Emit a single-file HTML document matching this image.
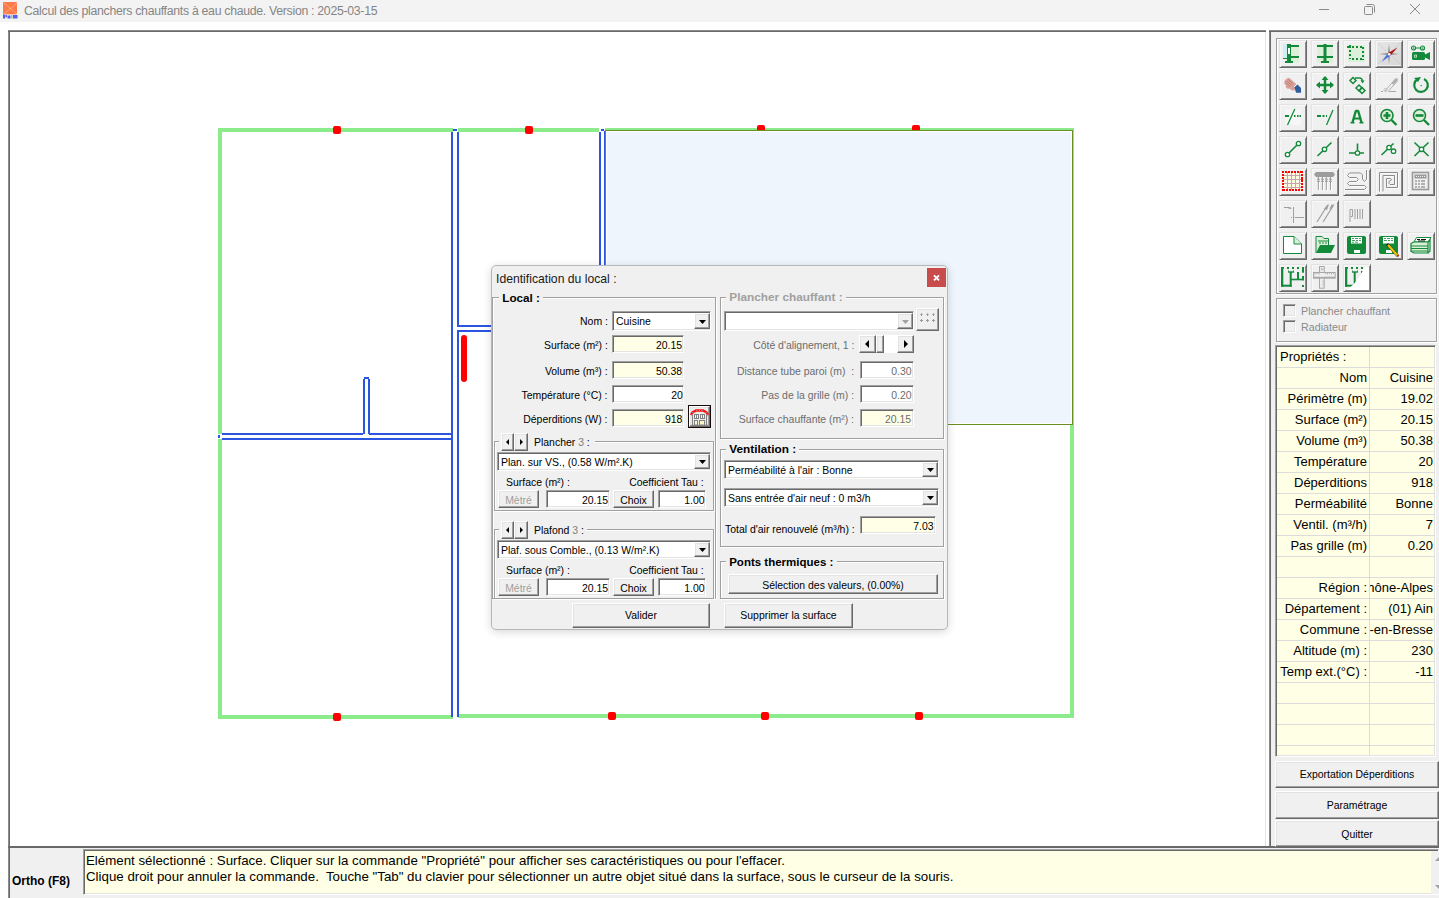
<!DOCTYPE html>
<html><head><meta charset="utf-8">
<style>
html,body{margin:0;padding:0;}
body{width:1439px;height:898px;overflow:hidden;position:relative;background:#fff;font-family:"Liberation Sans",sans-serif;color:#000;}
.a{position:absolute;}
.t{position:absolute;white-space:nowrap;line-height:1;}
.r{text-align:right;}
/* sunken textbox */
.tb{position:absolute;box-sizing:border-box;border:1px solid;border-color:#a0a0a0 #fff #fff #a0a0a0;box-shadow:inset 1px 1px #696969,inset -1px -1px #e3e3e3;background:#fff;}
.ye{background:#ffffe8;}
/* raised button */
.bt{position:absolute;box-sizing:border-box;border:1px solid;border-color:#fff #696969 #696969 #fff;box-shadow:inset -1px -1px #a0a0a0,inset 1px 1px #e3e3e3;background:#f0f0f0;}
/* etched group */
.gb{position:absolute;box-sizing:border-box;border:1px solid #a0a0a0;box-shadow:inset 1px 1px #fff,1px 1px #fff;}
.tbtn{position:absolute;width:28px;height:28px;box-sizing:border-box;border:1px solid;border-color:#e3e3e3 #696969 #696969 #e3e3e3;box-shadow:inset 1px 1px #f7f7f7,inset -1px -1px #8c8c8c;background:#f0f0f0;}
.tbtn svg{position:absolute;left:-1px;top:-1px;}
.cb{position:absolute;width:13px;height:13px;box-sizing:border-box;border:1px solid;border-color:#a0a0a0 #fff #fff #a0a0a0;box-shadow:inset 1px 1px #696969,inset -1px -1px #e3e3e3;background:#f0f0f0;}
.gr{position:absolute;left:1px;width:158px;height:21px;box-sizing:border-box;border-bottom:1px solid #dcdcdc;display:flex;font-size:13px;line-height:20px;}
.gl{box-sizing:border-box;width:93px;padding-right:2px;border-right:1px solid #dcdcdc;display:flex;justify-content:flex-end;overflow:hidden;white-space:nowrap;}
.gv{box-sizing:border-box;width:65px;padding-right:2px;display:flex;justify-content:flex-end;overflow:hidden;white-space:nowrap;}
</style></head><body>

<!-- title bar -->
<div class="a" style="left:0;top:0;width:1439px;height:22px;background:#f3f3f3;"></div>
<div class="a" id="appicon" style="left:2px;top:1px;width:17px;height:18px;">
<svg width="17" height="18" viewBox="0 0 17 18"><rect x="1" y="1" width="14" height="12.5" rx="0.5" fill="#fb7a4e"/><path d="M2 2L15 13M15 2L2 13" stroke="#ffd98a" stroke-width="0.8" stroke-dasharray="1 0.6"/>
<path d="M0.5 13.5H16.5V18H0.5Z" fill="#f2f5c8" opacity="0.6"/><g fill="#5360ef"><rect x="1" y="13.5" width="2.2" height="4"/><rect x="3.5" y="14" width="1.5" height="2.2"/><rect x="5.5" y="14.5" width="3" height="3"/><rect x="9.2" y="14" width="1.2" height="3.5" fill="#9aa0c8"/><rect x="11" y="14" width="4.5" height="3.5"/></g></svg>
</div>
<div class="t" style="left:24px;top:4.5px;font-size:12.3px;letter-spacing:-0.3px;color:#858585;">Calcul des planchers chauffants à eau chaude. Version : 2025-03-15</div>
<div class="a" style="left:1319px;top:9px;width:10px;height:1px;background:#8a8a8a;"></div>
<svg class="a" style="left:1363px;top:3px;" width="13" height="13" viewBox="0 0 13 13"><rect x="1.5" y="3.5" width="8" height="8" rx="1" fill="none" stroke="#8a8a8a"/><path d="M3.5 1.5h6a2 2 0 0 1 2 2v6" fill="none" stroke="#8a8a8a"/></svg>
<svg class="a" style="left:1409px;top:3px;" width="12" height="12" viewBox="0 0 12 12"><path d="M1 1L11 11M11 1L1 11" stroke="#8a8a8a" stroke-width="1"/></svg>

<!-- canvas frame -->
<div class="a" style="left:8px;top:30px;width:2px;height:868px;background:#696969;box-shadow:inset 1px 0 #8c8c8c;"></div>
<div class="a" style="left:8px;top:30px;width:1258px;height:2px;background:#696969;box-shadow:inset 0 1px #8c8c8c;"></div>
<div class="a" style="left:1265px;top:32px;width:1px;height:814px;background:#e3e3e3;"></div>

<!-- floor plan -->
<svg class="a" style="left:0;top:0;" width="1439" height="898" shape-rendering="crispEdges">
<rect x="218" y="128" width="235" height="4" fill="#8cec8c"/>
<rect x="458" y="128" width="141" height="4" fill="#8cec8c"/>
<rect x="605" y="128" width="469" height="4" fill="#8cec8c"/>
<rect x="218" y="128" width="4" height="306" fill="#8cec8c"/>
<rect x="218" y="439" width="4" height="280" fill="#8cec8c"/>
<rect x="218" y="715" width="235" height="4" fill="#8cec8c"/>
<rect x="458" y="714" width="616" height="4" fill="#8cec8c"/>
<rect x="1070" y="128" width="4" height="590" fill="#8cec8c"/>
<rect x="1073" y="128" width="1" height="590" fill="#8cec8c"/>
<rect x="451" y="132" width="2" height="585" fill="#2b55e0"/>
<rect x="457" y="132" width="2" height="195" fill="#2b55e0"/>
<rect x="457" y="330" width="2" height="387" fill="#2b55e0"/>
<rect x="453" y="129" width="4" height="2" fill="#2b55e0"/>
<rect x="459" y="325" width="141" height="2" fill="#2b55e0"/>
<rect x="459" y="330" width="141" height="2" fill="#2b55e0"/>
<rect x="599" y="132" width="2" height="195" fill="#2b55e0"/>
<rect x="604" y="131" width="1" height="196" fill="#2b55e0"/>
<rect x="601" y="129" width="3" height="2" fill="#2b55e0"/>
<rect x="222" y="433" width="141" height="2" fill="#2b55e0"/>
<rect x="369" y="433" width="82" height="2" fill="#2b55e0"/>
<rect x="222" y="438" width="229" height="2" fill="#2b55e0"/>
<rect x="218" y="435" width="2" height="3" fill="#2b55e0"/>
<rect x="363" y="379" width="2" height="55" fill="#2b55e0"/>
<rect x="368" y="379" width="2" height="55" fill="#2b55e0"/>
<rect x="364" y="377" width="5" height="2" fill="#2b55e0"/>
<rect x="333" y="126" width="8" height="8" rx="2" fill="#ff0000" shape-rendering="auto"/>
<rect x="525" y="126" width="8" height="8" rx="2" fill="#ff0000" shape-rendering="auto"/>
<rect x="757" y="125" width="8" height="8" rx="2" fill="#ff0000" shape-rendering="auto"/>
<rect x="912" y="125" width="8" height="8" rx="2" fill="#ff0000" shape-rendering="auto"/>
<rect x="333" y="713" width="8" height="8" rx="2" fill="#ff0000" shape-rendering="auto"/>
<rect x="608" y="712" width="8" height="8" rx="2" fill="#ff0000" shape-rendering="auto"/>
<rect x="761" y="712" width="8" height="8" rx="2" fill="#ff0000" shape-rendering="auto"/>
<rect x="915" y="712" width="8" height="8" rx="2" fill="#ff0000" shape-rendering="auto"/>
<rect x="461" y="335" width="6" height="47" rx="3" fill="#ff0000" shape-rendering="auto"/>
<rect x="605" y="130" width="468" height="295" fill="#6b8e23"/>
<rect x="606" y="131" width="466" height="293" fill="#ffffff"/>
<rect x="607" y="132" width="464" height="291" fill="#eef5fd"/>
<rect x="604" y="131" width="1" height="196" fill="#2b55e0"/>
<rect x="1073" y="128" width="1" height="590" fill="#8cec8c"/>
</svg>

<!-- right panel -->
<div class="a" style="left:1269px;top:30px;width:170px;height:816px;background:#f0f0f0;"></div>
<div class="a" style="left:1269px;top:30px;width:2px;height:816px;background:#696969;box-shadow:inset 1px 0 #8c8c8c;"></div>
<div class="a" style="left:1269px;top:30px;width:170px;height:2px;background:#696969;box-shadow:inset 0 1px #8c8c8c;"></div>

<!-- status bar -->
<div class="a" style="left:10px;top:848px;width:1429px;height:50px;background:#f0f0f0;"></div>
<div class="a" style="left:8px;top:846px;width:1431px;height:2px;background:#696969;"></div>

<div class="gb" style="left:1276px;top:38px;width:161px;height:256px;"></div>
<div class="tbtn" style="left:1279px;top:40px;"><svg width="28" height="28" viewBox="0 0 28 28"><rect x="4" y="4" width="4" height="15" fill="#cdeef2"/><rect x="8" y="5" width="12" height="18" fill="#dcefd9"/>
<rect x="8" y="4" width="4" height="19" fill="#138a3a"/><rect x="9" y="8" width="2" height="6" fill="#fff"/>
<rect x="12" y="5" width="8" height="2" fill="#138a3a"/><rect x="12" y="16" width="8" height="2" fill="#138a3a"/>
<rect x="6" y="21" width="8" height="2" fill="#138a3a"/><rect x="4" y="18" width="4" height="1" fill="#138a3a"/></svg></div>
<div class="tbtn" style="left:1311px;top:40px;"><svg width="28" height="28" viewBox="0 0 28 28"><rect x="6" y="4" width="16" height="19" fill="#dcefd9"/>
<rect x="6" y="5" width="16" height="2" fill="#138a3a"/><rect x="6" y="16" width="16" height="2" fill="#138a3a"/>
<rect x="12.5" y="4" width="3" height="18" fill="#138a3a"/><rect x="10" y="21" width="8" height="2" fill="#138a3a"/></svg></div>
<div class="tbtn" style="left:1343px;top:40px;"><svg width="28" height="28" viewBox="0 0 28 28"><rect x="5" y="5" width="17" height="17" fill="#dcefd9"/>
<path d="M4 7h3M7 5v3M9 7h2M13 7h2M17 7h2M20 7v2M20 11v2M20 15v2M20 19v1M7 10v2M7 14v2M7 18v1M9 19h2M13 19h2M17 19h2" stroke="#138a3a" stroke-width="2"/></svg></div>
<div class="tbtn" style="left:1375px;top:40px;"><svg width="28" height="28" viewBox="0 0 28 28"><defs><linearGradient id="cg" x1="0" y1="0" x2="1" y2="1"><stop offset="0" stop-color="#e6e6e6"/><stop offset="1" stop-color="#d6d6d6"/></linearGradient></defs>
<rect x="2" y="2" width="24" height="23" fill="url(#cg)"/>
<path d="M3 3L11 11M25 3L17 11M3 24L11 16M25 24L17 16" stroke="#c8c8c8" stroke-width="0.7"/>
<path d="M14 4L15 13L24 14L15 15L14 24L13 15L4 14L13 13Z" fill="#8c8c8c"/>
<path d="M22.5 7.5L15.5 13L13 15.5Z" fill="#d42020"/><path d="M22.5 7.5L15.5 15.5L13 13Z" fill="#b01818"/>
<path d="M6.5 22L13 15.5L15.5 13Z" fill="#2040c0"/><path d="M6.5 22L15.5 15.5L13 13Z" fill="#4a70e0"/>
<circle cx="14.2" cy="14.3" r="1.3" fill="#fff"/></svg></div>
<div class="tbtn" style="left:1407px;top:40px;"><svg width="28" height="28" viewBox="0 0 28 28"><circle cx="6.5" cy="8" r="2" fill="none" stroke="#138a3a" stroke-width="1.2"/><circle cx="15.5" cy="8" r="2" fill="none" stroke="#138a3a" stroke-width="1.2"/>
<path d="M8.5 8h5" stroke="#138a3a" stroke-width="1"/><circle cx="6.5" cy="8" r="0.7" fill="#138a3a"/><circle cx="15.5" cy="8" r="0.7" fill="#138a3a"/>
<rect x="5" y="12" width="13" height="8" rx="1.5" fill="#138a3a"/><path d="M17 15L23 12V20L17 17Z" fill="#138a3a"/>
<rect x="7.3" y="14.7" width="2.5" height="2.8" fill="#fff"/><rect x="8" y="15.3" width="1.2" height="1.6" fill="#138a3a"/></svg></div>
<div class="tbtn" style="left:1279px;top:72px;"><svg width="28" height="28" viewBox="0 0 28 28"><g transform="rotate(42 12 12)"><rect x="5" y="8.5" width="14" height="8" rx="4" fill="#d9a09a"/>
<path d="M7 10.5H13M7 12.5H13.5M7 14.5H13" stroke="#b77b74" stroke-width="0.8"/></g>
<ellipse cx="8.5" cy="15.2" rx="2" ry="1.3" transform="rotate(35 8.5 15.2)" fill="#d9a09a"/>
<path d="M15.5 15.5L18.5 12.5L22 16V20.8H17Z" fill="#2d5f9e"/><path d="M15 15L18 12" stroke="#fff" stroke-width="0.9"/></svg></div>
<div class="tbtn" style="left:1311px;top:72px;"><svg width="28" height="28" viewBox="0 0 28 28"><path d="M14 5V21M6 13H22" stroke="#138a3a" stroke-width="2.5"/>
<path d="M14 4L10.5 8H17.5Z M14 22L10.5 18H17.5Z M5 13L9 9.5V16.5Z M23 13L19 9.5V16.5Z" fill="#138a3a"/></svg></div>
<div class="tbtn" style="left:1343px;top:72px;"><svg width="28" height="28" viewBox="0 0 28 28"><path d="M10 5.5L13 8.5L10 11.5L7 8.5Z" fill="none" stroke="#138a3a" stroke-width="1.5"/>
<path d="M16 13L19 16L16 19L13 16Z" fill="none" stroke="#138a3a" stroke-width="1.5"/>
<path d="M19 15.5L22 18.5L19 21.5L16 18.5Z" fill="none" stroke="#138a3a" stroke-width="1.5"/>
<path d="M12 6H17C18.5 6 19 7 19.5 8.5" fill="none" stroke="#138a3a" stroke-width="1.5"/><path d="M17.5 8L21.5 8.5L19.5 11.5Z" fill="#138a3a"/></svg></div>
<div class="tbtn" style="left:1375px;top:72px;"><svg width="28" height="28" viewBox="0 0 28 28"><path d="M10 19L21 6M13 19.5L22.5 9" stroke="#b0b0b0" stroke-width="1"/><path d="M17 11L22 6L23 8L18 13Z" fill="#a8a8a8"/>
<path d="M6 19.5h2M14 19.5h7" stroke="#a8a8a8" stroke-width="1"/><circle cx="10.5" cy="18" r="1.6" fill="none" stroke="#b8b8b8" stroke-width="0.8"/></svg></div>
<div class="tbtn" style="left:1407px;top:72px;"><svg width="28" height="28" viewBox="0 0 28 28"><path d="M10.5 7.3A6.8 6.8 0 1 0 17 7" fill="none" stroke="#138a3a" stroke-width="2.2"/>
<path d="M7 6L14 5L11 10Z" fill="#138a3a"/><rect x="13.5" y="13" width="1.2" height="1.2" fill="#138a3a"/></svg></div>
<div class="tbtn" style="left:1279px;top:104px;"><svg width="28" height="28" viewBox="0 0 28 28"><rect x="6" y="5" width="16" height="16" fill="#f6f6f6"/>
<path d="M6 12h4M15 12h1.5M18 12h1.5M20.5 12h1.5" stroke="#138a3a" stroke-width="1.8"/><path d="M8.5 21L15.8 5" stroke="#138a3a" stroke-width="1.3"/></svg></div>
<div class="tbtn" style="left:1311px;top:104px;"><svg width="28" height="28" viewBox="0 0 28 28"><path d="M6 12h4M11.5 12h2M15 12h1" stroke="#138a3a" stroke-width="1.8"/><path d="M15.5 21L22 6" stroke="#138a3a" stroke-width="1.3"/></svg></div>
<div class="tbtn" style="left:1343px;top:104px;"><svg width="28" height="28" viewBox="0 0 28 28"><path d="M9.5 18.5L12.8 7H15.2L18.5 18.5" fill="none" stroke="#138a3a" stroke-width="2.4" stroke-linejoin="bevel"/><path d="M11 14.5h6" stroke="#138a3a" stroke-width="2"/><path d="M7.5 18.7h4M16.5 18.7h4" stroke="#138a3a" stroke-width="1.4"/></svg></div>
<div class="tbtn" style="left:1375px;top:104px;"><svg width="28" height="28" viewBox="0 0 28 28"><circle cx="12" cy="11.5" r="6" fill="#dcefd9" stroke="#138a3a" stroke-width="1.6"/><path d="M16.5 16L21.5 21" stroke="#138a3a" stroke-width="2.4"/>
<path d="M12 8v7M8.5 11.5h7" stroke="#138a3a" stroke-width="2.6"/></svg></div>
<div class="tbtn" style="left:1407px;top:104px;"><svg width="28" height="28" viewBox="0 0 28 28"><circle cx="12.5" cy="11.5" r="6" fill="#dcefd9" stroke="#138a3a" stroke-width="1.6"/><path d="M17 16L22 21" stroke="#138a3a" stroke-width="2.4"/>
<path d="M8.5 11.5h8" stroke="#138a3a" stroke-width="2.6"/></svg></div>
<div class="tbtn" style="left:1279px;top:136px;"><svg width="28" height="28" viewBox="0 0 28 28"><path d="M8.5 18.5L19.5 7.5" stroke="#138a3a" stroke-width="1.6"/><circle cx="8.5" cy="18.5" r="2.2" fill="#fff" stroke="#138a3a" stroke-width="1.3"/><circle cx="19.5" cy="7.5" r="2.2" fill="#fff" stroke="#138a3a" stroke-width="1.3"/></svg></div>
<div class="tbtn" style="left:1311px;top:136px;"><svg width="28" height="28" viewBox="0 0 28 28"><path d="M6.5 20L20.5 6.5" stroke="#138a3a" stroke-width="1.6"/><circle cx="13.5" cy="13.3" r="2.2" fill="#fff" stroke="#138a3a" stroke-width="1.3"/></svg></div>
<div class="tbtn" style="left:1343px;top:136px;"><svg width="28" height="28" viewBox="0 0 28 28"><path d="M14.5 7.5V17M6 17h15" stroke="#138a3a" stroke-width="1.6"/><circle cx="14.5" cy="17" r="2.2" fill="#fff" stroke="#138a3a" stroke-width="1.3"/></svg></div>
<div class="tbtn" style="left:1375px;top:136px;"><svg width="28" height="28" viewBox="0 0 28 28"><path d="M6.5 19L18.5 7.5" stroke="#138a3a" stroke-width="1.6"/><circle cx="14" cy="11.5" r="2.2" fill="#fff" stroke="#138a3a" stroke-width="1.3"/><circle cx="18.5" cy="15.2" r="2.2" fill="#fff" stroke="#138a3a" stroke-width="1.3"/></svg></div>
<div class="tbtn" style="left:1407px;top:136px;"><svg width="28" height="28" viewBox="0 0 28 28"><path d="M7.5 6.5L21.5 20M21.5 6.5L7.5 20" stroke="#138a3a" stroke-width="1.6"/><circle cx="14.5" cy="13.3" r="2.2" fill="#fff" stroke="#138a3a" stroke-width="1.3"/></svg></div>
<div class="tbtn" style="left:1279px;top:168px;"><svg width="28" height="28" viewBox="0 0 28 28"><rect x="4" y="4" width="19" height="18" fill="#fffde0"/>
<path d="M8.5 4V22M12.5 4V22M16.5 4V22M20.5 4V22M4 7.5H23M4 11.5H23M4 15.5H23M4 19.5H23" stroke="#c8a0b8" stroke-width="1"/>
<g fill="#ff0000"><rect x="3" y="3" width="2" height="2"/><rect x="6" y="3" width="2" height="2"/><rect x="9" y="3" width="2" height="2"/><rect x="12" y="3" width="2" height="2"/><rect x="15" y="3" width="2" height="2"/><rect x="18" y="3" width="2" height="2"/><rect x="21" y="3" width="3" height="2"/>
<rect x="3" y="21" width="3" height="2"/><rect x="7" y="21" width="2" height="2"/><rect x="10" y="21" width="2" height="2"/><rect x="13" y="21" width="2" height="2"/><rect x="16" y="21" width="2" height="2"/><rect x="19" y="21" width="2" height="2"/><rect x="22" y="21" width="2" height="2"/>
<rect x="3" y="6" width="2" height="2"/><rect x="3" y="9" width="2" height="2"/><rect x="3" y="12" width="2" height="2"/><rect x="3" y="15" width="2" height="2"/><rect x="3" y="18" width="2" height="2"/>
<rect x="22" y="6" width="2" height="2"/><rect x="22" y="9" width="2" height="5"/><rect x="22" y="15" width="2" height="2"/><rect x="22" y="18" width="2" height="2"/></g></svg></div>
<div class="tbtn" style="left:1311px;top:168px;"><svg width="28" height="28" viewBox="0 0 28 28"><path d="M3 6.5L5 4H22L24 6.5L22 9H5Z" fill="#9c9c9c"/>
<g stroke="#fff" stroke-width="1"><path d="M8.4 9.5V22.5M12.4 9.5V22.5M16.3 9.5V22.5M20.5 9.5V22.5"/></g>
<g stroke="#9c9c9c" stroke-width="1"><path d="M7.4 9V22M11.4 9V22M15.3 9V22M19.5 9V22M6 11.2H9M10 11.2H13M14 11.2H17M18 11.2H21M6 13.3H9M10 13.3H13M14 13.3H17M18 13.3H21"/></g></svg></div>
<div class="tbtn" style="left:1343px;top:168px;"><svg width="28" height="28" viewBox="0 0 28 28"><g fill="none" stroke-width="1"><path transform="translate(0.7,0.7)" d="M23.5 2V11.5L21.5 13.5L19.5 11V7L17.5 5H6.5L4.5 7.5L6.5 9.5H13.5L15.5 11.5L13.5 13.5H6.5L4.5 15.5L6.5 17.5H21.5L23.5 19.5L21.5 21.5H2" stroke="#fff"/>
<path d="M23.5 2V11.5L21.5 13.5L19.5 11V7L17.5 5H6.5L4.5 7.5L6.5 9.5H13.5L15.5 11.5L13.5 13.5H6.5L4.5 15.5L6.5 17.5H21.5L23.5 19.5L21.5 21.5H2" stroke="#8c8c8c"/></g></svg></div>
<div class="tbtn" style="left:1375px;top:168px;"><svg width="28" height="28" viewBox="0 0 28 28"><g fill="none" stroke-width="1"><path transform="translate(0.7,0.7)" d="M4.5 23.5V4.5H22.5V19.5H11.5V10.5H15.5L16.5 12L14 13.5V15.5L15 16.5H19.5V7.5H8V23.5" stroke="#fff"/>
<path d="M4.5 23.5V4.5H22.5V19.5H11.5V10.5H15.5L16.5 12L14 13.5V15.5L15 16.5H19.5V7.5H8V23.5" stroke="#8c8c8c"/></g></svg></div>
<div class="tbtn" style="left:1407px;top:168px;"><svg width="28" height="28" viewBox="0 0 28 28"><rect x="5.5" y="4.5" width="16" height="17" fill="none" stroke="#9a9a9a" stroke-width="1.6"/><rect x="7.5" y="6.5" width="12" height="4" fill="#9a9a9a"/>
<path d="M9 8.5h9" stroke="#f0f0f0" stroke-width="1" stroke-dasharray="1 1"/>
<path d="M8 13h2M11 13h2M14 13h4M8 16h2M11 13h2M11 16h2M14 16h4M8 19h2M11 19h2M14 19h4" stroke="#9a9a9a" stroke-width="1.6"/></svg></div>
<div class="tbtn" style="left:1279px;top:200px;"><svg width="28" height="28" viewBox="0 0 28 28"><path d="M5 7.5H11L12 8.5M14.5 7V23M15.5 17.5H25" stroke="#a0a0a0" stroke-width="1"/><rect x="12" y="17" width="1" height="1" fill="#a0a0a0"/></svg></div>
<div class="tbtn" style="left:1311px;top:200px;"><svg width="28" height="28" viewBox="0 0 28 28"><path d="M6 22L16 6M12 22L22 6" stroke="#a0a0a0" stroke-width="1.2"/><path d="M13 9L16.5 4.5H18L16 10Z M18.5 9L20.5 4.5H23.5L20 9.5Z" fill="#a0a0a0"/></svg></div>
<div class="tbtn" style="left:1343px;top:200px;"><svg width="28" height="28" viewBox="0 0 28 28"><path d="M7 22V9.5H9.5V16.5H7.5M12 9V19M14.5 9V19M17 9V19M19.5 9V19" fill="none" stroke="#a0a0a0" stroke-width="1"/></svg></div>
<div class="tbtn" style="left:1279px;top:232px;"><svg width="28" height="28" viewBox="0 0 28 28"><path d="M4.5 4.5H15L22.5 12V21.5H4.5Z" fill="#fff" stroke="#138a3a" stroke-width="1"/><path d="M15 4.5V12H22.5" fill="#dcefd9" stroke="#138a3a" stroke-width="1"/></svg></div>
<div class="tbtn" style="left:1311px;top:232px;"><svg width="28" height="28" viewBox="0 0 28 28"><path d="M5 21V4.5H11L13 6.5H17.5V13" fill="#dcefd9" stroke="#138a3a" stroke-width="1"/>
<path d="M7 9h10M8 11h2M11 11h2M14 11h2" stroke="#138a3a" stroke-width="1"/>
<path d="M5 21L9 13H24L20 21Z" fill="#138a3a"/></svg></div>
<div class="tbtn" style="left:1343px;top:232px;"><svg width="28" height="28" viewBox="0 0 28 28"><rect x="4" y="4" width="19" height="18" rx="2" fill="#138a3a"/><rect x="8" y="5" width="11" height="6.5" fill="#fff"/>
<path d="M9 6.5h2M12 6.5h3M16 6.5h2M9 8.5h3M13 8.5h2M16 8.5h2M9 10.2h2M12 10.2h3" stroke="#138a3a" stroke-width="0.8"/>
<rect x="11" y="18" width="6" height="3" fill="#fff"/></svg></div>
<div class="tbtn" style="left:1375px;top:232px;"><svg width="28" height="28" viewBox="0 0 28 28"><rect x="4" y="4" width="19" height="18" rx="2" fill="#138a3a"/><rect x="8" y="5" width="11" height="6.5" fill="#fff"/>
<path d="M9 6.5h2M12 6.5h3M16 6.5h2M9 8.5h3M13 8.5h2M16 8.5h2" stroke="#138a3a" stroke-width="0.8"/>
<rect x="11" y="18" width="6" height="3" fill="#fff"/>
<path d="M12 12L23 24" stroke="#222" stroke-width="2.8"/><path d="M13 13L23 24" stroke="#f2c500" stroke-width="2.2"/><rect x="22" y="23" width="1.6" height="1.6" fill="#e00"/></svg></div>
<div class="tbtn" style="left:1407px;top:232px;"><svg width="28" height="28" viewBox="0 0 28 28"><path d="M7 10L9.5 5.5H24L21 10Z" fill="#fff" stroke="#138a3a" stroke-width="1"/><path d="M10 7.5h3M14 7.5h5M11 9h7" stroke="#111" stroke-width="1"/>
<path d="M4 11.5L7 10H21V21H7L4 19.5Z" fill="#dcefd9" stroke="#138a3a" stroke-width="1.2"/>
<path d="M4 14H21M4 16.5H21M4 19H21M21 10L23 8V19L21 21" fill="none" stroke="#138a3a" stroke-width="1.2"/></svg></div>
<div class="tbtn" style="left:1279px;top:264px;"><svg width="28" height="28" viewBox="0 0 28 28"><g fill="#138a3a"><rect x="2" y="3" width="2.3" height="19.7"/><rect x="2" y="3" width="3" height="1.7"/><rect x="2" y="20.7" width="10.7" height="2"/>
<rect x="8" y="3" width="2" height="2"/><rect x="13" y="3" width="2" height="2"/><rect x="18" y="3" width="2" height="2"/>
<rect x="9" y="7.3" width="6" height="1.4"/><rect x="9" y="6.5" width="1" height="1"/><rect x="14" y="6.5" width="1" height="1"/><rect x="10.7" y="8" width="2" height="14.7"/>
<rect x="23" y="3" width="2" height="5.7"/><rect x="23" y="12" width="2" height="4.3"/><rect x="12" y="14.7" width="13" height="1.6"/><rect x="18" y="8" width="2" height="8"/><rect x="23" y="21" width="2" height="2"/></g></svg></div>
<div class="tbtn" style="left:1311px;top:264px;"><svg width="28" height="28" viewBox="0 0 28 28"><rect x="8" y="2" width="5.7" height="22.7" fill="#a8a8a8"/><rect x="9" y="3" width="3.7" height="20.7" fill="#eeeeee"/>
<rect x="2" y="8" width="22.7" height="6.7" fill="#a8a8a8"/><rect x="3" y="9" width="20.7" height="3.7" fill="#eeeeee"/><rect x="9" y="9" width="3.7" height="3.7" fill="#eeeeee"/>
<path d="M4 9v1.5M6 9v1M8 9v1.5M14.5 9v1M16.5 9v1.5M18.5 9v1M20.5 9v1.5M22.5 9v1M11.5 17h1.2M11.5 19h1.2M11.5 21h1.2M10 4l2 2M10 6.5l2-2" stroke="#a8a8a8" stroke-width="0.9"/></svg></div>
<div class="tbtn" style="left:1343px;top:264px;"><svg width="28" height="28" viewBox="0 0 28 28"><g fill="#138a3a"><rect x="2" y="3" width="2.3" height="19.7"/><rect x="2" y="3" width="3" height="1.7"/><rect x="2" y="20.7" width="10.7" height="2"/>
<rect x="8" y="3" width="2" height="2"/><rect x="13" y="3" width="2" height="2"/><rect x="18" y="3" width="2" height="2"/>
<rect x="9" y="7.3" width="6" height="1.4"/><rect x="9" y="6.5" width="1" height="1"/><rect x="14" y="6.5" width="1" height="1"/><rect x="10.7" y="8" width="2" height="14.7"/>
<rect x="18" y="7" width="2" height="2"/></g>
<path d="M21.5 3H26V26H4C11 21 18 12 21.5 3Z" fill="#fff"/></svg></div>
<!-- checkbox group -->
<div class="gb" style="left:1276px;top:298px;width:161px;height:44px;"></div>
<div class="cb" style="left:1283px;top:304px;"></div>
<div class="t" style="left:1301px;top:305.5px;font-size:11px;color:#8a8a8a;transform:scaleX(0.973);transform-origin:left center;">Plancher chauffant</div>
<div class="cb" style="left:1283px;top:320px;"></div>
<div class="t" style="left:1301px;top:321.5px;font-size:11px;color:#8a8a8a;transform:scaleX(0.973);transform-origin:left center;">Radiateur</div>

<!-- property grid -->
<div class="a" style="left:1275px;top:345px;width:161px;height:412px;box-sizing:border-box;border:1px solid;border-color:#a0a0a0 #fff #fff #a0a0a0;box-shadow:inset 1px 1px #696969,inset -1px -1px #e3e3e3;background:#ffffe6;overflow:hidden;">
<div class="gr" style="top:1px;"><div class="gl" style="justify-content:flex-start;padding-left:3px;">Propriétés :</div><div class="gv"></div></div>
<div class="gr" style="top:22px;"><div class="gl" style="justify-content:flex-end;">Nom</div><div class="gv">Cuisine</div></div>
<div class="gr" style="top:43px;"><div class="gl" style="justify-content:flex-end;">Périmètre (m)</div><div class="gv">19.02</div></div>
<div class="gr" style="top:64px;"><div class="gl" style="justify-content:flex-end;">Surface (m²)</div><div class="gv">20.15</div></div>
<div class="gr" style="top:85px;"><div class="gl" style="justify-content:flex-end;">Volume (m³)</div><div class="gv">50.38</div></div>
<div class="gr" style="top:106px;"><div class="gl" style="justify-content:flex-end;">Température</div><div class="gv">20</div></div>
<div class="gr" style="top:127px;"><div class="gl" style="justify-content:flex-end;">Déperditions</div><div class="gv">918</div></div>
<div class="gr" style="top:148px;"><div class="gl" style="justify-content:flex-end;">Perméabilité</div><div class="gv">Bonne</div></div>
<div class="gr" style="top:169px;"><div class="gl" style="justify-content:flex-end;">Ventil. (m³/h)</div><div class="gv">7</div></div>
<div class="gr" style="top:190px;"><div class="gl" style="justify-content:flex-end;">Pas grille (m)</div><div class="gv">0.20</div></div>
<div class="gr" style="top:211px;"><div class="gl" style="justify-content:flex-end;"></div><div class="gv"></div></div>
<div class="gr" style="top:232px;"><div class="gl" style="justify-content:flex-end;">Région :</div><div class="gv">Auvergne-Rhône-Alpes</div></div>
<div class="gr" style="top:253px;"><div class="gl" style="justify-content:flex-end;">Département :</div><div class="gv">(01) Ain</div></div>
<div class="gr" style="top:274px;"><div class="gl" style="justify-content:flex-end;">Commune :</div><div class="gv">Bourg-en-Bresse</div></div>
<div class="gr" style="top:295px;"><div class="gl" style="justify-content:flex-end;">Altitude (m) :</div><div class="gv">230</div></div>
<div class="gr" style="top:316px;"><div class="gl" style="justify-content:flex-end;">Temp ext.(°C) :</div><div class="gv">-11</div></div>
<div class="gr" style="top:337px;"><div class="gl" style="justify-content:flex-end;"></div><div class="gv"></div></div>
<div class="gr" style="top:358px;"><div class="gl" style="justify-content:flex-end;"></div><div class="gv"></div></div>
<div class="gr" style="top:379px;"><div class="gl" style="justify-content:flex-end;"></div><div class="gv"></div></div>
<div class="gr" style="top:400px;"><div class="gl" style="justify-content:flex-end;"></div><div class="gv"></div></div>
</div>

<!-- buttons -->
<div class="bt" style="left:1275px;top:761px;width:164px;height:27px;"></div>
<div class="t" style="left:1275px;top:769.4px;width:164px;text-align:center;font-size:11.5px;transform:scaleX(0.909);">Exportation Déperditions</div>
<div class="bt" style="left:1275px;top:791px;width:164px;height:28px;"></div>
<div class="t" style="left:1275px;top:800.4px;width:164px;text-align:center;font-size:11.5px;transform:scaleX(0.909);">Paramétrage</div>
<div class="bt" style="left:1275px;top:820px;width:164px;height:27px;"></div>
<div class="t" style="left:1275px;top:829px;width:164px;text-align:center;font-size:11.5px;transform:scaleX(0.909);">Quitter</div>

<!-- status -->
<div class="t" style="left:12px;top:875px;font-size:12px;font-weight:bold;">Ortho (F8)</div>
<div class="tb" style="left:83px;top:849px;width:1356px;height:46px;background:#ffffe6;"></div>
<div class="t" style="left:86px;top:852.5px;font-size:13.3px;line-height:16px;">Elément sélectionné : Surface. Cliquer sur la commande "Propriété" pour afficher ses caractéristiques ou pour l'effacer.<br>Clique droit pour annuler la commande.&nbsp; Touche "Tab" du clavier pour sélectionner un autre objet situé dans la surface, sous le curseur de la souris.</div>
<div class="a" style="left:1431px;top:851px;width:8px;height:43px;background:#f0f0f0;"></div>
<svg class="a" style="left:1431px;top:851px;" width="8" height="43"><path d="M4 10L8 6V10Z" fill="#a0a0a0"/><path d="M4 34L8 38V34Z" fill="#a0a0a0"/></svg>

<div class="a" style="left:491px;top:265px;width:457px;height:365px;box-sizing:border-box;border:1px solid #b4b8bc;border-radius:5px;background:#f0f0f0;box-shadow:0 2px 8px rgba(0,0,0,0.16);"></div>
<div class="t" style="top:272.67px;font-size:12.2px;color:#1a1a1a;left:496px;">Identification du local :</div>
<div class="a" style="left:927px;top:268px;width:19px;height:19px;background:#c94c4c;"></div>
<svg class="a" style="left:927px;top:268px;" width="19" height="19"><path d="M7 7.3L12 12.3M12 7.3L7 12.3" stroke="#fff" stroke-width="1.9"/></svg>
<div class="gb" style="left:492px;top:297px;width:224px;height:302px;"></div>
<div class="t" style="top:291.70px;font-size:11.7px;color:#000;font-weight:bold;background:#f0f0f0;left:499px;">&nbsp;Local :&nbsp;</div>
<div class="t" style="top:315.18px;font-size:11.6px;color:#000;transform:scaleX(0.9009);transform-origin:right center;right:831.5px;">Nom :</div>
<div class="t" style="top:339.18px;font-size:11.6px;color:#000;transform:scaleX(0.9009);transform-origin:right center;right:831.5px;">Surface (m²) :</div>
<div class="t" style="top:365.18px;font-size:11.6px;color:#000;transform:scaleX(0.9009);transform-origin:right center;right:831.5px;">Volume (m³) :</div>
<div class="t" style="top:389.18px;font-size:11.6px;color:#000;transform:scaleX(0.9009);transform-origin:right center;right:831.5px;">Température (°C) :</div>
<div class="t" style="top:413.18px;font-size:11.6px;color:#000;transform:scaleX(0.9009);transform-origin:right center;right:831.5px;">Déperditions (W) :</div>
<div class="tb" style="left:612px;top:311px;width:99px;height:20px;"></div>
<div class="bt" style="left:694px;top:313px;width:16px;height:16px;"></div>
<svg class="a" style="left:698.5px;top:319.5px;" width="7" height="4"><path d="M0 0H7L3.5 4Z" fill="#000"/></svg>
<div class="t" style="top:314.98px;font-size:11.6px;color:#000;transform:scaleX(0.9009);transform-origin:left center;left:616px;">Cuisine</div>
<div class="tb ye" style="left:612px;top:335px;width:72px;height:18px;"></div>
<div class="t" style="top:338.98px;font-size:11.6px;color:#000;transform:scaleX(0.9009);transform-origin:right center;right:756.5px;">20.15</div>
<div class="tb ye" style="left:612px;top:361px;width:72px;height:18px;"></div>
<div class="t" style="top:364.98px;font-size:11.6px;color:#000;transform:scaleX(0.9009);transform-origin:right center;right:756.5px;">50.38</div>
<div class="tb" style="left:612px;top:385px;width:72px;height:18px;"></div>
<div class="t" style="top:388.98px;font-size:11.6px;color:#000;transform:scaleX(0.9009);transform-origin:right center;right:756.5px;">20</div>
<div class="tb ye" style="left:612px;top:409px;width:72px;height:18px;"></div>
<div class="t" style="top:412.98px;font-size:11.6px;color:#000;transform:scaleX(0.9009);transform-origin:right center;right:756.5px;">918</div>
<div class="a" style="left:688px;top:405px;width:23px;height:23px;box-sizing:border-box;border:1px solid #1a0a0a;"></div>
<div class="bt" style="left:689px;top:406px;width:21px;height:21px;background:#ececec;"></div>
<svg class="a" style="left:688px;top:405px;" width="23" height="23" viewBox="0 0 23 23">
<path d="M3 10L4.5 7.5L8 5.5H15L18.5 7.5L20 10" fill="none" stroke="#ff1010" stroke-width="2.4"/>
<g fill="#30d8e8"><rect x="4.5" y="7" width="1" height="1"/><rect x="8.5" y="5" width="1" height="1"/><rect x="11" y="5" width="1" height="1"/><rect x="13.5" y="5" width="1" height="1"/><rect x="17.5" y="7" width="1" height="1"/><rect x="3.5" y="9.5" width="1" height="1"/><rect x="18.5" y="9.5" width="1" height="1"/></g>
<path d="M4.5 10V20M18.5 10V20M3 20.3H20" stroke="#808080" stroke-width="1"/>
<rect x="6.5" y="9.5" width="4" height="4" fill="#fff7c8" stroke="#808080" stroke-width="1"/><rect x="12.5" y="9.5" width="4" height="4" fill="#fff7c8" stroke="#808080" stroke-width="1"/>
<path d="M8.5 9.5V13.5M14.5 9.5V13.5" stroke="#808080" stroke-width="1"/>
<rect x="6.5" y="15.5" width="3" height="4.5" fill="#fff7c8" stroke="#808080" stroke-width="1"/><rect x="11.5" y="15.5" width="5" height="4.5" fill="#fff7c8" stroke="#808080" stroke-width="1"/>
</svg>
<div class="gb" style="left:494px;top:441px;width:220px;height:70px;"></div>
<div class="a" style="left:499px;top:433px;width:96px;height:16px;background:#f0f0f0;"></div>
<div class="bt" style="left:501px;top:433px;width:13px;height:18px;"></div>
<div class="bt" style="left:514px;top:433px;width:14px;height:18px;"></div>
<svg class="a" style="left:501px;top:433px;" width="27" height="18"><path d="M5 9L8 6V12Z" fill="#000"/><path d="M22 9L19 6V12Z" fill="#000"/></svg>
<div class="t" style="top:436.18px;font-size:11.6px;color:#000;transform:scaleX(0.9009);transform-origin:left center;left:533.5px;">Plancher <span style="color:#808080">3</span> :</div>
<div class="tb" style="left:497px;top:452px;width:214px;height:19px;"></div>
<div class="bt" style="left:694px;top:454px;width:16px;height:15px;"></div>
<svg class="a" style="left:698.5px;top:460.0px;" width="7" height="4"><path d="M0 0H7L3.5 4Z" fill="#000"/></svg>
<div class="t" style="top:455.98px;font-size:11.6px;color:#000;transform:scaleX(0.9009);transform-origin:left center;left:501px;">Plan. sur VS., (0.58 W/m².K)</div>
<div class="t" style="top:476.18px;font-size:11.6px;color:#000;transform:scaleX(0.9009);transform-origin:left center;left:506px;">Surface (m²) :</div>
<div class="t" style="top:476.18px;font-size:11.6px;color:#000;transform:scaleX(0.9009);transform-origin:right center;right:735px;">Coefficient Tau :</div>
<div class="bt" style="left:498px;top:490px;width:41px;height:18px;"></div>
<div class="t" style="top:493.68px;font-size:11.6px;color:#a0a0a0;transform:scaleX(0.9009);transform-origin:center center;left:498px;width:41px;text-align:center;">Mètré</div>
<div class="tb" style="left:546px;top:490px;width:64px;height:18px;"></div>
<div class="t" style="top:493.68px;font-size:11.6px;color:#000;transform:scaleX(0.9009);transform-origin:right center;right:831px;">20.15</div>
<div class="bt" style="left:613px;top:490px;width:41px;height:18px;"></div>
<div class="t" style="top:493.68px;font-size:11.6px;color:#000;transform:scaleX(0.9009);transform-origin:center center;left:613px;width:41px;text-align:center;">Choix</div>
<div class="tb" style="left:658px;top:490px;width:48px;height:18px;"></div>
<div class="t" style="top:493.68px;font-size:11.6px;color:#000;transform:scaleX(0.9009);transform-origin:right center;right:734.5px;">1.00</div>
<div class="gb" style="left:494px;top:529px;width:220px;height:70px;"></div>
<div class="a" style="left:499px;top:521px;width:88px;height:16px;background:#f0f0f0;"></div>
<div class="bt" style="left:501px;top:521px;width:13px;height:18px;"></div>
<div class="bt" style="left:514px;top:521px;width:14px;height:18px;"></div>
<svg class="a" style="left:501px;top:521px;" width="27" height="18"><path d="M5 9L8 6V12Z" fill="#000"/><path d="M22 9L19 6V12Z" fill="#000"/></svg>
<div class="t" style="top:524.18px;font-size:11.6px;color:#000;transform:scaleX(0.9009);transform-origin:left center;left:533.5px;">Plafond <span style="color:#808080">3</span> :</div>
<div class="tb" style="left:497px;top:540px;width:214px;height:19px;"></div>
<div class="bt" style="left:694px;top:542px;width:16px;height:15px;"></div>
<svg class="a" style="left:698.5px;top:548.0px;" width="7" height="4"><path d="M0 0H7L3.5 4Z" fill="#000"/></svg>
<div class="t" style="top:543.98px;font-size:11.6px;color:#000;transform:scaleX(0.9009);transform-origin:left center;left:501px;">Plaf. sous Comble., (0.13 W/m².K)</div>
<div class="t" style="top:564.18px;font-size:11.6px;color:#000;transform:scaleX(0.9009);transform-origin:left center;left:506px;">Surface (m²) :</div>
<div class="t" style="top:564.18px;font-size:11.6px;color:#000;transform:scaleX(0.9009);transform-origin:right center;right:735px;">Coefficient Tau :</div>
<div class="bt" style="left:498px;top:578px;width:41px;height:18px;"></div>
<div class="t" style="top:581.68px;font-size:11.6px;color:#a0a0a0;transform:scaleX(0.9009);transform-origin:center center;left:498px;width:41px;text-align:center;">Métré</div>
<div class="tb" style="left:546px;top:578px;width:64px;height:18px;"></div>
<div class="t" style="top:581.68px;font-size:11.6px;color:#000;transform:scaleX(0.9009);transform-origin:right center;right:831px;">20.15</div>
<div class="bt" style="left:613px;top:578px;width:41px;height:18px;"></div>
<div class="t" style="top:581.68px;font-size:11.6px;color:#000;transform:scaleX(0.9009);transform-origin:center center;left:613px;width:41px;text-align:center;">Choix</div>
<div class="tb" style="left:658px;top:578px;width:48px;height:18px;"></div>
<div class="t" style="top:581.68px;font-size:11.6px;color:#000;transform:scaleX(0.9009);transform-origin:right center;right:734.5px;">1.00</div>
<div class="bt" style="left:572px;top:603px;width:138px;height:25px;"></div>
<div class="t" style="top:608.68px;font-size:11.6px;color:#000;transform:scaleX(0.9009);transform-origin:center center;left:572px;width:138px;text-align:center;">Valider</div>
<div class="gb" style="left:720px;top:297px;width:224px;height:142px;"></div>
<div class="t" style="top:291.61px;font-size:11.8px;color:#a0a0a0;font-weight:bold;background:#f0f0f0;left:726px;">&nbsp;Plancher chauffant :&nbsp;</div>
<div class="tb" style="left:724px;top:311px;width:190px;height:20px;"></div>
<div class="bt" style="left:897px;top:313px;width:16px;height:16px;"></div>
<svg class="a" style="left:901.5px;top:319.5px;" width="7" height="4"><path d="M0 0H7L3.5 4Z" fill="#a0a0a0"/></svg>
<div class="bt" style="left:916px;top:308px;width:23px;height:23px;"></div>
<svg class="a" style="left:916px;top:308px;" width="23" height="23"><g fill="#9a9a9a"><path d="M4 7l1.5-2 1.5 2h-1v1h-1v-1z M10 7l1.5-2 1.5 2h-1v1h-1v-1z M16 7l1.5-2 1.5 2h-1v1h-1v-1z"/><path d="M5 12h1v-1h-1z M4 12h3v1h-3z M5 13h1v1h-1z M11 11h1v3h-1z M10 12h3v1h-3z M17 11h1v3h-1z M16 12h3v1h-3z"/></g></svg>
<div class="t" style="top:339.18px;font-size:11.6px;color:#6d6d6d;transform:scaleX(0.9009);transform-origin:right center;right:585px;">Côté d'alignement, 1 :</div>
<div class="bt" style="left:859px;top:335px;width:17px;height:18px;"></div>
<div class="a" style="left:876px;top:335px;width:38px;height:18px;background:#fff;"></div>
<div class="bt" style="left:876px;top:335px;width:8px;height:18px;"></div>
<div class="bt" style="left:897px;top:335px;width:17px;height:18px;"></div>
<svg class="a" style="left:859px;top:335px;" width="55" height="18"><path d="M6 9L10 5V13Z" fill="#000"/><path d="M49 9L45 5V13Z" fill="#000"/></svg>
<div class="t" style="top:364.98px;font-size:11.6px;color:#6d6d6d;transform:scaleX(0.9009);transform-origin:right center;right:585px;">Distance tube paroi (m)&nbsp; :</div>
<div class="tb" style="left:860px;top:361px;width:54px;height:18px;"></div>
<div class="t" style="top:364.98px;font-size:11.6px;color:#6d6d6d;transform:scaleX(0.9009);transform-origin:right center;right:527.5px;">0.30</div>
<div class="t" style="top:388.98px;font-size:11.6px;color:#6d6d6d;transform:scaleX(0.9009);transform-origin:right center;right:585px;">Pas de la grille (m) :</div>
<div class="tb" style="left:860px;top:385px;width:54px;height:18px;"></div>
<div class="t" style="top:388.98px;font-size:11.6px;color:#6d6d6d;transform:scaleX(0.9009);transform-origin:right center;right:527.5px;">0.20</div>
<div class="t" style="top:412.98px;font-size:11.6px;color:#6d6d6d;transform:scaleX(0.9009);transform-origin:right center;right:585px;">Surface chauffante (m²) :</div>
<div class="tb ye" style="left:860px;top:409px;width:54px;height:18px;"></div>
<div class="t" style="top:412.98px;font-size:11.6px;color:#6d6d6d;transform:scaleX(0.9009);transform-origin:right center;right:527.5px;">20.15</div>
<div class="gb" style="left:720px;top:449px;width:224px;height:98px;"></div>
<div class="t" style="top:444.31px;font-size:11.8px;color:#000;font-weight:bold;background:#f0f0f0;left:726px;">&nbsp;Ventilation :&nbsp;</div>
<div class="tb" style="left:724px;top:460px;width:215px;height:19px;"></div>
<div class="bt" style="left:922px;top:462px;width:16px;height:15px;"></div>
<svg class="a" style="left:926.5px;top:468.0px;" width="7" height="4"><path d="M0 0H7L3.5 4Z" fill="#000"/></svg>
<div class="t" style="top:463.98px;font-size:11.6px;color:#000;transform:scaleX(0.9009);transform-origin:left center;left:728px;">Perméabilité à l'air : Bonne</div>
<div class="tb" style="left:724px;top:488px;width:215px;height:19px;"></div>
<div class="bt" style="left:922px;top:490px;width:16px;height:15px;"></div>
<svg class="a" style="left:926.5px;top:496.0px;" width="7" height="4"><path d="M0 0H7L3.5 4Z" fill="#000"/></svg>
<div class="t" style="top:491.98px;font-size:11.6px;color:#000;transform:scaleX(0.9009);transform-origin:left center;left:728px;">Sans entrée d'air neuf : 0 m3/h</div>
<div class="t" style="top:523.18px;font-size:11.6px;color:#000;transform:scaleX(0.9009);transform-origin:left center;left:725px;">Total d'air renouvelé (m³/h) :</div>
<div class="tb ye" style="left:860px;top:516px;width:76px;height:18px;"></div>
<div class="t" style="top:519.68px;font-size:11.6px;color:#000;transform:scaleX(0.9009);transform-origin:right center;right:505px;">7.03</div>
<div class="gb" style="left:720px;top:561px;width:224px;height:38px;"></div>
<div class="t" style="top:556.77px;font-size:11.5px;color:#000;font-weight:bold;background:#f0f0f0;left:726px;">&nbsp;Ponts thermiques :&nbsp;</div>
<div class="bt" style="left:728px;top:574px;width:210px;height:20px;"></div>
<div class="t" style="top:578.68px;font-size:11.6px;color:#000;transform:scaleX(0.9009);transform-origin:center center;left:728px;width:210px;text-align:center;">Sélection des valeurs, (0.00%)</div>
<div class="bt" style="left:724px;top:603px;width:129px;height:25px;"></div>
<div class="t" style="top:608.68px;font-size:11.6px;color:#000;transform:scaleX(0.9009);transform-origin:center center;left:724px;width:129px;text-align:center;">Supprimer la surface</div>
</body></html>
